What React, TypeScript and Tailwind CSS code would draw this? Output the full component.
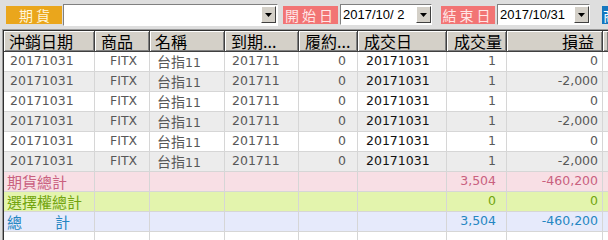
import React from 'react';

const cjk = '"Noto Sans CJK TC", "Noto Sans CJK SC", sans-serif';
const verdana = '"DejaVu Sans", "Noto Sans CJK TC", sans-serif';

interface Col {
  w: string;
  head: string;
  headAlign: string;
  cell: string;
}

const cols: Col[] = [
  { w: 'w-[91px]', head: '沖銷日期', headAlign: 'justify-start pl-[5px]', cell: 'justify-start pl-[6px]' },
  { w: 'w-[55px]', head: '商品', headAlign: 'justify-start pl-[6px]', cell: 'justify-start pl-[15px]' },
  { w: 'w-[75px]', head: '名稱', headAlign: 'justify-start pl-[5px]', cell: 'justify-start pl-[7px]' },
  { w: 'w-[74px]', head: '到期...', headAlign: 'justify-start pl-[6px]', cell: 'justify-start pl-[7px]' },
  { w: 'w-[59px]', head: '履約...', headAlign: 'justify-start pl-[6px]', cell: 'justify-end pr-[11px]' },
  { w: 'w-[89px]', head: '成交日', headAlign: 'justify-start pl-[6px]', cell: 'justify-start pl-[8px]' },
  { w: 'w-[60px]', head: '成交量', headAlign: 'justify-start pl-[7px]', cell: 'justify-end pr-[10px]' },
  { w: 'w-[96px]', head: '損益', headAlign: 'justify-end pr-[8px]', cell: 'justify-end pr-[4px]' },
];

const trades = [
  { pnl: '0' },
  { pnl: '-2,000' },
  { pnl: '0' },
  { pnl: '-2,000' },
  { pnl: '0' },
  { pnl: '-2,000' },
];

const totals = [
  { bg: 'bg-[#f8dfe5]', text: 'text-[#c9617f]', label: <span>期貨總計</span>, qty: '3,504', pnl: '-460,200' },
  { bg: 'bg-[#e3f4ad]', text: 'text-[#72a40f]', label: <span>選擇權總計</span>, qty: '0', pnl: '0' },
  {
    bg: 'bg-[#e6eafb]',
    text: 'text-[#2586c2]',
    label: (
      <span className="flex">
        <span>總</span>
        <span className="ml-[33px]">計</span>
      </span>
    ),
    qty: '3,504',
    pnl: '-460,200',
  },
];

function DropArrow() {
  return (
    <div className="w-[15px] h-[17px] shrink-0 bg-[#d4d0c8] border border-t-white border-l-white border-r-[#404040] border-b-[#404040] flex items-center justify-center">
      <svg width="7" height="4" viewBox="0 0 7 4">
        <path d="M0 0h7L3.5 4z" fill="#000" />
      </svg>
    </div>
  );
}

function ColorButton({ label, className }: { label: string; className: string }) {
  return (
    <div
      className={`h-[18px] shrink-0 flex items-center justify-center text-[14px] tracking-[3px] leading-none ${className}`}
      style={{ fontFamily: cjk }}
    >
      {label}
    </div>
  );
}

function DateBox({ value, className }: { value: string; className: string }) {
  return (
    <div className={`h-[21px] shrink-0 bg-white border border-t-[#808080] border-l-[#808080] border-r-white border-b-white flex items-center ${className}`}>
      <span
        className="flex-1 pl-[2px] text-[13px] text-black whitespace-pre leading-none"
        style={{ fontFamily: '"Liberation Sans", sans-serif' }}
      >
        {value}
      </span>
      <DropArrow />
    </div>
  );
}

function Cell({ col, children, className = '' }: { col: Col; children?: React.ReactNode; className?: string }) {
  return (
    <div className={`${col.w} shrink-0 h-full flex items-center border-r border-[#d6d6d6] whitespace-nowrap leading-none ${col.cell} ${className}`}>
      {children}
    </div>
  );
}

export default function App() {
  return (
    <div className="w-[608px] h-[240px] overflow-hidden bg-[#dedede] flex flex-col select-none">
      {/* toolbar */}
      <div className="h-[29px] shrink-0 flex items-center pl-[6px] overflow-hidden">
        <ColorButton label="期貨" className="w-[56px] bg-[#eaa61c] text-[#fff6dc] pl-[4px]" />
        <div className="ml-[1px] w-[215px] h-[22px] shrink-0 bg-white border border-t-[#808080] border-l-[#808080] border-r-white border-b-white flex items-center justify-end pr-[1px]">
          <DropArrow />
        </div>
        <ColorButton label="開始日" className="ml-[5px] w-[55px] bg-[#f27474] text-[#ffe6e6]" />
        <DateBox value="2017/10/ 2" className="ml-[2px] w-[92px]" />
        <ColorButton label="結束日" className="ml-[9px] w-[54px] bg-[#f27474] text-[#ffe6e6]" />
        <DateBox value="2017/10/31" className="ml-[2px] w-[93px]" />
        <div
          className="ml-[12px] w-[40px] h-[18px] shrink-0 bg-[#1577bf] text-white text-[14px] flex items-center pl-[1px] leading-none"
          style={{ fontFamily: cjk }}
        >
          商品
        </div>
      </div>

      {/* grid */}
      <div className="flex-1 ml-[2px] border-t border-l border-t-[#9a9a9a] border-l-[#9a9a9a] bg-white">
        <div className="h-full border-t border-l border-t-[#303030] border-l-[#303030] flex flex-col">
          {/* header */}
          <div className="h-[21px] shrink-0 flex bg-[#d4d0c8] border-b border-[#404040]" style={{ fontFamily: cjk }}>
            {cols.map((c) => (
              <div
                key={c.head}
                className={`${c.w} shrink-0 h-full flex items-center text-[16px] text-black leading-none border-r border-r-[#404040] shadow-[inset_1px_1px_0_#ffffff,inset_-1px_-1px_0_#808080] ${c.headAlign}`}
              >
                {c.head}
              </div>
            ))}
            <div className="flex-1 h-full shadow-[inset_1px_1px_0_#ffffff,inset_-1px_-1px_0_#808080]" />
          </div>

          {/* rows */}
          <div className="flex-1 flex flex-col text-[12.5px]" style={{ fontFamily: verdana }}>
            {trades.map((t, i) => (
              <div
                key={i}
                className={`h-[20px] shrink-0 flex border-b border-[#d6d6d6] text-[#585858] ${i % 2 === 0 ? 'bg-white' : 'bg-[#ececec]'}`}
              >
                <Cell col={cols[0]}>20171031</Cell>
                <Cell col={cols[1]}>FITX</Cell>
                <Cell col={cols[2]}>
                  <span className="leading-none">
                    <span className="text-[14px]" style={{ fontFamily: cjk }}>台指</span>11
                  </span>
                </Cell>
                <Cell col={cols[3]}>201711</Cell>
                <Cell col={cols[4]}>0</Cell>
                <Cell col={cols[5]} className="text-[#111111]">20171031</Cell>
                <Cell col={cols[6]}>1</Cell>
                <Cell col={cols[7]}>{t.pnl}</Cell>
                <div className="flex-1" />
              </div>
            ))}
            {totals.map((r, i) => (
              <div key={i} className={`h-[20px] shrink-0 flex border-b border-[#d6d6d6] ${r.bg} ${r.text}`}>
                <Cell col={cols[0]} className="!pl-[3px] overflow-visible">
                  <span className="text-[15px] leading-none" style={{ fontFamily: cjk }}>{r.label}</span>
                </Cell>
                <Cell col={cols[1]} />
                <Cell col={cols[2]} />
                <Cell col={cols[3]} />
                <Cell col={cols[4]} />
                <Cell col={cols[5]} />
                <Cell col={cols[6]}>{r.qty}</Cell>
                <Cell col={cols[7]}>{r.pnl}</Cell>
                <div className="flex-1" />
              </div>
            ))}
            <div className="flex-1 flex">
              {cols.map((c) => (
                <Cell key={c.head} col={c} />
              ))}
            </div>
          </div>
        </div>
      </div>
    </div>
  );
}
